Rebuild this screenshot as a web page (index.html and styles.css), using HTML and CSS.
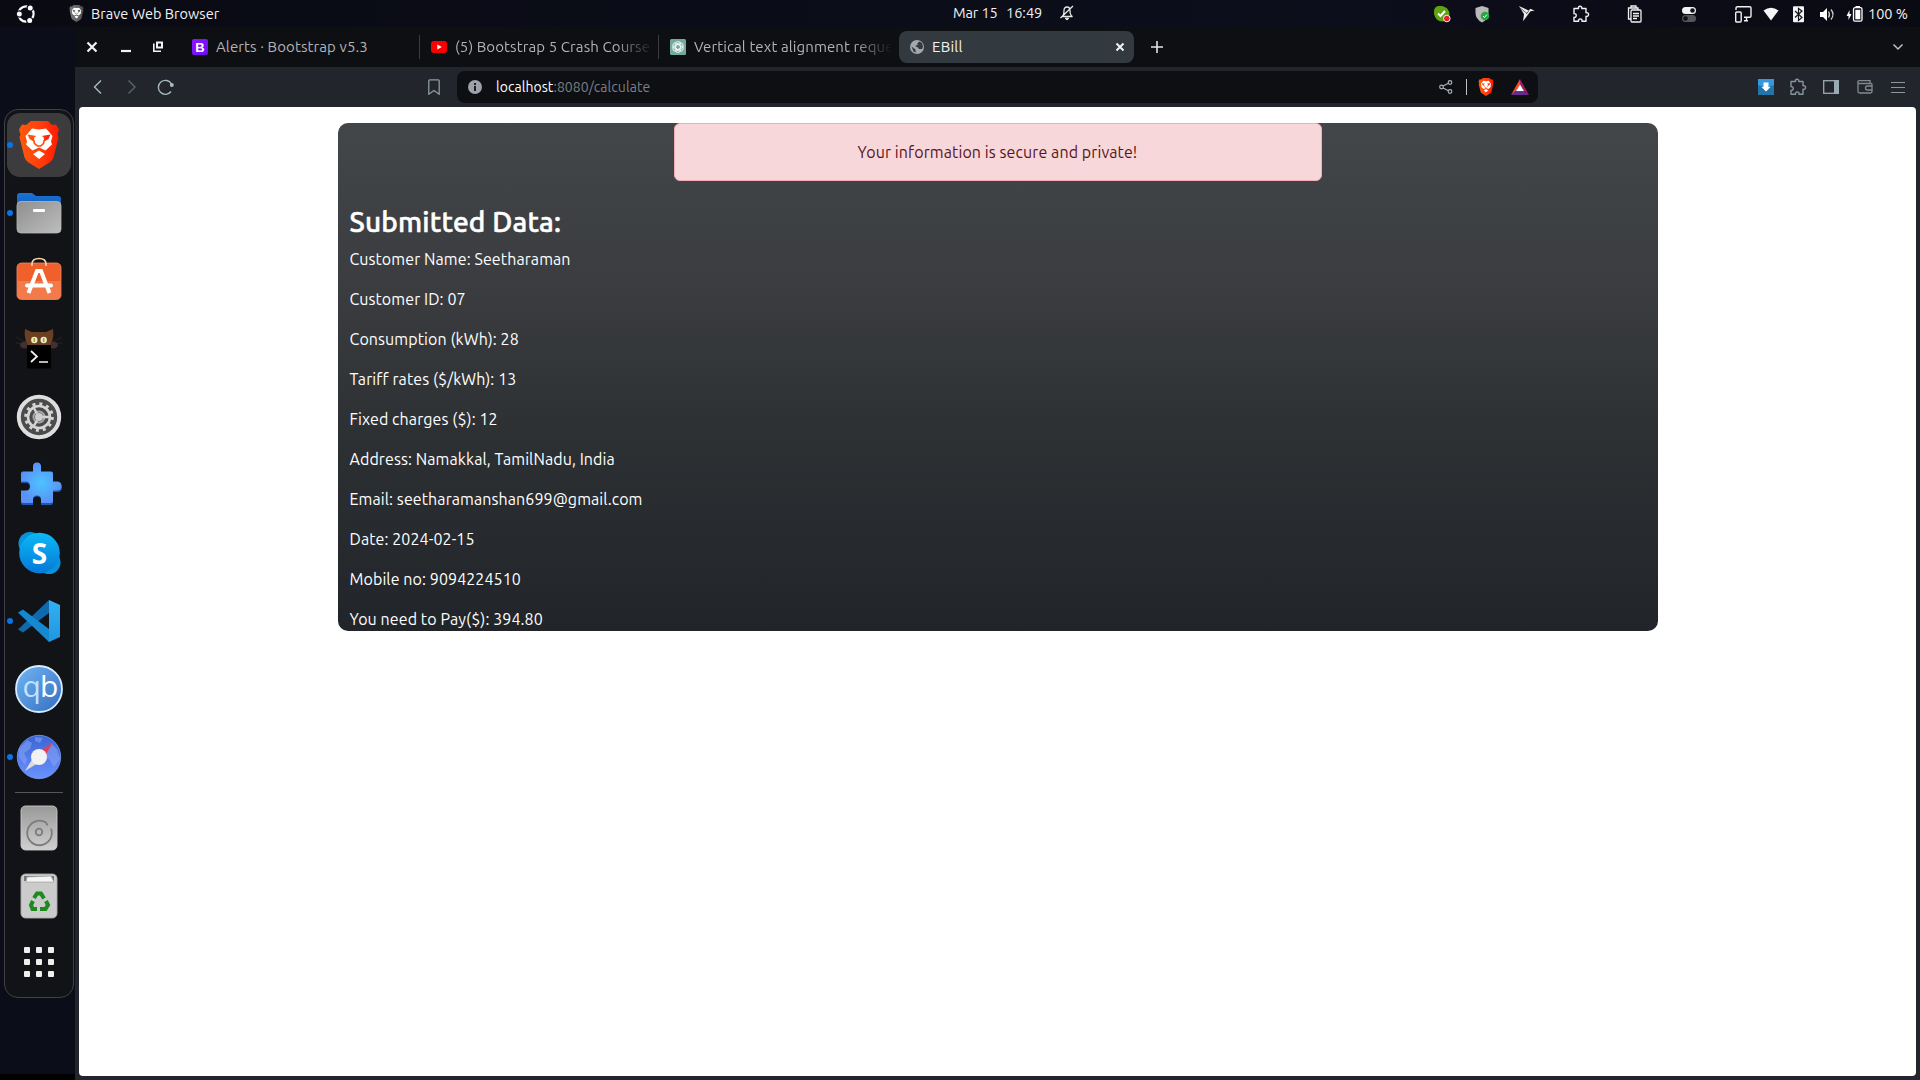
FILE: index.html
```html
<!DOCTYPE html>
<html lang="en">
<head>
<meta charset="utf-8">
<title>EBill</title>
<link rel="stylesheet" href="styles.css">
</head>
<body>
<svg class="defs" aria-hidden="true">
  <defs>
    <linearGradient id="g-brave" x1="0" x2="1"><stop offset="0" stop-color="#ff5a0a"/><stop offset=".55" stop-color="#ff3d0c"/><stop offset="1" stop-color="#ff1a00"/></linearGradient>
    <linearGradient id="g-blue" x1="0" x2="0" y1="0" y2="1"><stop offset="0" stop-color="#1a73d6"/><stop offset="1" stop-color="#0f5fbe"/></linearGradient>
    <linearGradient id="g-gray" x1="0" x2="1" y1="0" y2="1"><stop offset="0" stop-color="#8f8f8f"/><stop offset="1" stop-color="#bdbdbd"/></linearGradient>
    <linearGradient id="g-disk" x1="0" x2="0" y1="0" y2="1"><stop offset="0" stop-color="#999"/><stop offset="1" stop-color="#cfcfcf"/></linearGradient>
    <linearGradient id="g-skype" x1="0" x2="0" y1="0" y2="1"><stop offset="0" stop-color="#0cb8f4"/><stop offset="1" stop-color="#0579d8"/></linearGradient>
    <linearGradient id="g-vs" x1="0" x2="0" y1="0" y2="1"><stop offset="0" stop-color="#33b0f2"/><stop offset="1" stop-color="#2196e3"/></linearGradient>
    <linearGradient id="g-qb" x1="0" x2="1" y1="0" y2="1"><stop offset="0" stop-color="#72b4f5"/><stop offset="1" stop-color="#356ebf"/></linearGradient>
    <linearGradient id="g-nav" x1="0" x2="0" y1="0" y2="1"><stop offset="0" stop-color="#3b64d4"/><stop offset="1" stop-color="#6b93ff"/></linearGradient>
    <radialGradient id="g-puz"><stop offset="0" stop-color="#4cc4ff"/><stop offset="1" stop-color="#5a92f8"/></radialGradient>
    <linearGradient id="g-bs" x1="0" x2="1" y1="0" y2="1"><stop offset="0" stop-color="#9013fe"/><stop offset="1" stop-color="#6610f2"/></linearGradient>
    <symbol id="lion" viewBox="0 0 40 48">
      <path class="shield" d="M12 0h17l4 4 4-.5 3 5-1.500 5 1 3-5 20q-1 3-4 5L20 48l-10.500-6.500q-3-2-4-5L.5 16.500l1-3L0 8.500l3-5 4 .5z"/>
      <path class="face" d="M13 7.500l7 1 7-1 6.500 7.500-1.500 5.500 1 3-6.500 6L20 26.500l-6.500 3-6.500-6 1-3L6.500 15zM20 29.500l6 3.500-6 5-6-5z"/>
      <path class="shield" d="M8.500 13.500l9 1.500-2 1-1 4.500-4-2.500zM31.500 13.500l-9 1.500 2 1 1 4.500 4-2.500z"/>
      <path class="crease" d="M14.800 19l.7 3.500 3 2.500h3l3-2.500.7-3.500" />
    </symbol>
    <symbol id="puzzle" viewBox="0 0 18 18">
      <path d="M2 3.500h4.500c-.8-3 3.800-3 3.300 0H14v4.200c3.400-.8 3.400 4.300 0 3.600V16.300H10c.6-3.300-4-3.300-3.500 0H2v-4c3 .7 3-4.300 0-3.600z" fill="none" stroke="currentColor" stroke-width="1.400" stroke-linejoin="round"/>
    </symbol>
  </defs>
</svg>

<div class="desktop">
  <header class="topbar">
    <svg class="ubuntu" viewBox="0 0 20 20"><circle cx="10" cy="10" r="7.600" fill="none" stroke="#fff" stroke-width="2.200"/><g fill="#fff" stroke="#0a0b14" stroke-width="1.200"><circle cx="3.300" cy="10" r="3.100"/><circle cx="14.200" cy="3.900" r="3.100"/><circle cx="13.700" cy="16.600" r="3.100"/></g></svg>
    <svg class="app-icon gray-lion"><use href="#lion"/></svg>
    <span class="app-name">Brave Web Browser</span>
    <div class="clock"><span class="date">Mar 15</span><span class="time">16:49</span>
      <svg width="14" height="16" viewBox="0 0 14 16" fill="none" stroke="#e8e8e8"><path d="M2 11.500q2-1 2-6Q4 2 7 2t3 3.500q0 5 2.500 6zM.5 13L13 1" stroke-width="1.300"/><path d="M5 13.200h4L7 15z" fill="#fff"/></svg>
    </div>
    <div class="status">
      <svg class="s" viewBox="0 0 24 24"><rect x="4" y="4" width="12" height="12" rx="5" fill="#5fa30f"/><circle cx="12" cy="12" r="7.500" fill="#5fa30f"/><path d="M8 11.500l2.500 2.500L15 9" stroke="#fff" stroke-width="2" fill="none"/><circle cx="16.800" cy="16.500" r="3.300" fill="#e11e2b" stroke="#eee"/></svg>
      <svg class="s gap-m" viewBox="0 0 24 24"><path d="M12 4l6.500 2v5q0 6-6.500 9.500Q5.500 17 5.500 11V6z" fill="#b9b9b9"/><circle cx="15" cy="14" r="4.300" fill="#29a744"/><path d="M13 14l1.500 1.500 2.500-3" stroke="#fff" fill="none"/></svg>
      <svg class="s gap-bird" viewBox="0 0 24 24"><path d="M5 4l9.500 4.500 2-1.800 4 2-4 .6-3 4-4.500 6 1-7z" fill="#ececec"/><path d="M5 5l8 6.500M15 8.500l-2.500 3.500" stroke="#333" stroke-width=".7"/></svg>
      <svg class="s gap-l white"><use href="#puzzle" x="3" y="3" width="18" height="18"/></svg>
      <svg class="s gap-30" viewBox="0 0 24 24" fill="none" stroke="#f2f2f2" stroke-width="1.300"><path d="M8 17H5.500V6H15v2M8 6V4h5v2"/><rect x="8" y="8" width="10" height="12" rx="1"/><path d="M10 11.500h6M10 14h6M10 16.500h4"/></svg>
      <svg class="s gap-30" viewBox="0 0 24 24"><rect x="5" y="5" width="14" height="7" rx="3.500" fill="#f2f2f2"/><circle cx="15.500" cy="8.500" r="2.300" fill="#111"/><rect x="5" y="13" width="14" height="7" rx="3.500" fill="#55565b"/><circle cx="8.500" cy="16.500" r="2.300" fill="#111"/></svg>
      <svg class="s gap-30" viewBox="0 0 24 24" fill="none" stroke="#f0f0f0" stroke-width="1.400"><path d="M5 8V6q0-1.300 1.300-1.300h12.400Q20 4.700 20 6v8q0 1.300-1.300 1.300H13M15.500 15v3.500M13 18.800h4"/><rect x="4.700" y="10" width="5.500" height="10" rx="1"/></svg>
      <svg class="s gap-4" viewBox="0 0 24 24"><path d="M4.500 8.500Q12 3 19.500 8.500L12 18.500z" fill="#f5f5f5"/></svg>
      <svg class="s gap-3" viewBox="0 0 24 24"><rect x="7" y="4.200" width="11" height="16" rx="1" fill="#f5f5f5"/><path d="M9 9l7 6.500-3.500 3v-12L16 9l-7 6.500" fill="none" stroke="#15161d" stroke-width="1.200"/></svg>
      <svg class="s gap-5" viewBox="0 0 24 24"><path d="M5 10h3l4-4v13l-4-4H5z" fill="#fff"/><path d="M13.500 9.500q2 3 0 6M16 7.500q4 5 0 10" stroke="#ccc" stroke-width="1.300" fill="none"/></svg>
      <svg class="s gap-4" viewBox="0 0 24 24"><path d="M6.500 8L3.500 14h2v4l3-6h-2z" fill="#fff"/><rect x="10.500" y="5.700" width="8.500" height="13.500" rx="1.500" fill="none" stroke="#fff" stroke-width="1.300"/><path d="M12.500 4.500h4.500" stroke="#fff"/><rect x="12.300" y="7.800" width="5" height="9.500" fill="#fff"/></svg>
      <span class="battery">100 %</span>
    </div>
  </header>

  <div class="workspace">
    <aside class="side">
      <nav class="dock">
        <div class="item active running"><svg class="lion-dock"><use href="#lion"/></svg></div>
        <div class="item running"><svg viewBox="0 0 48 48"><path d="M2 18V7q0-3 3-3h12l4 3h22q3 0 3 3v8z" fill="url(#g-blue)"/><rect x="2" y="12.500" width="44" height="31.500" rx="4" fill="url(#g-gray)" stroke="#b8b8b8" stroke-width=".8"/><rect x="18" y="20" width="12" height="3" rx="1" fill="#fff"/></svg></div>
        <div class="item"><svg viewBox="0 0 48 48"><rect x="2" y="6" width="44" height="36.500" rx="4.500" fill="#f0602c" stroke="#f58a63" stroke-width=".8"/><path d="M2.400 24h43.200v14q0 4-4 4h-35q-4.200 0-4.200-4z" fill="#f37a4a"/><path d="M17 9V7q0-5.500 7-5.500T31 7v2" fill="none" stroke="#f3d6a8" stroke-width="1.600"/><path d="M13.500 36L22 14h4l8.500 22" fill="none" stroke="#fff" stroke-width="4"/><rect x="10" y="26.500" width="28" height="4" rx="2" fill="#fff"/></svg></div>
        <div class="item"><svg viewBox="0 0 48 48"><path d="M1 12l9 5M1 18l8 1M47 12l-9 5M47 18l-8 1" stroke="#2a2222"/><ellipse cx="10" cy="20" rx="5" ry="3.500" fill="#40302f"/><ellipse cx="38" cy="20" rx="5" ry="3.500" fill="#40302f"/><path d="M10 4l7 3h14l7-3q1 6-.5 11L35 20H13l-2.500-5Q9 9 10 4z" fill="#6b3f22"/><circle cx="19.300" cy="15" r="3.200" fill="#e8eac8"/><circle cx="28.700" cy="15" r="3.200" fill="#e8eac8"/><path d="M19.300 13v4M28.700 13v4" stroke="#a0a420" stroke-width="1.500"/><rect x="12" y="20" width="24" height="23.500" rx="1" fill="#000"/><path d="M16 26l6 5.500-6 5.500M24 37h9" fill="none" stroke="#f4f4f4" stroke-width="1.700"/></svg></div>
        <div class="item"><svg viewBox="0 0 48 48"><circle cx="24" cy="24" r="20.200" fill="#4b4b4b" stroke="#dedede" stroke-width="4"/><circle cx="24" cy="24" r="13.300" fill="none" stroke="#d5d5d5" stroke-width="3" stroke-dasharray="3 3.960"/><circle cx="24" cy="24" r="11" fill="none" stroke="#d5d5d5" stroke-width="2.600"/><circle cx="24" cy="24" r="5.500" fill="none" stroke="#a8a8a8" stroke-width="2"/><circle cx="24" cy="24" r="4" fill="#d0d0d0"/><path d="M28 24h8M22 27.500l-4 7M22 20.500l-4-7" stroke="#d5d5d5" stroke-width="2.500"/></svg></div>
        <div class="item"><svg viewBox="0 0 48 48"><path d="M8 12.500h10V7q0-4 4-4t4 4v5.500h10q2 0 2 2V22h4q5 0 5 4.500T42 31h-4v11q0 2-2 2H26v-5q0-3.500-4-3.500T18 39v5H8q-2 0-2-2V31h5q4 0 4-4.500T11 22H6v-7.500q0-2 2-2z" fill="#1e56b4"/><path d="M8 10.500h10V5.500q0-4 4-4t4 4v5h10q2 0 2 2v8h4q4.500 0 4.500 4.500t-4.500 4.500h-4V40q0 2-2 2H26v-4q0-3.500-4-3.500T18 38v4H8q-2 0-2-2V29.500h5q4 0 4-4.500t-4-4.500H6v-8q0-2 2-2z" fill="url(#g-puz)"/></svg></div>
        <div class="item"><svg viewBox="0 0 48 48"><circle cx="15" cy="14.500" r="11.500" fill="#0693dc"/><circle cx="34" cy="33.500" r="11.500" fill="#0693dc"/><circle cx="24.500" cy="24" r="20.300" fill="url(#g-skype)"/><text x="24.500" y="34.500" class="skype-s">S</text></svg></div>
        <div class="item running"><svg viewBox="0 0 48 48"><path d="M3 32.500L34 3v13L8 35.500z" fill="#0f69ad"/><path d="M3 15.500L8 12.500 34 32v13z" fill="#1488d0"/><path d="M34 3l11 5v32l-11 5z" fill="url(#g-vs)"/></svg></div>
        <div class="item"><svg viewBox="0 0 48 48"><circle cx="24" cy="24" r="23" fill="url(#g-qb)" stroke="#d8ecff" stroke-width="1.800"/><text x="7.500" y="31.500" class="qb"><tspan fill="#bfe3ff">q</tspan><tspan fill="#fff">b</tspan></text></svg></div>
        <div class="item running"><svg viewBox="0 0 48 48"><circle cx="24" cy="24" r="21.700" fill="url(#g-nav)" stroke="#7c9cf0" stroke-width=".8"/><path d="M4 16l8-9 5 3-2 6-6 4 3 7-2 5-6-8zM20 4l8 1-3 5-5-2zM36 10l6 6 3 10-6 8-5-8-4-1 2-8z" fill="#86a5f5" opacity=".55"/><path d="M38 9.500L20 21l7 7z" fill="#e0405a"/><path d="M10 38l11-18 7 7z" fill="#dcdcdc"/><circle cx="24" cy="24" r="8" fill="#f2f2f2"/></svg></div>
        <hr>
        <div class="item"><svg viewBox="0 0 48 48"><rect x="6" y="2" width="36" height="44" rx="4.500" fill="url(#g-disk)" stroke="#c8c8c8" stroke-width=".9"/><path d="M31 18.500A12.300 12.300 0 1 0 36 24.500M31 18.500l1.500 3" fill="none" stroke="#7c7c7c" stroke-width="1.800"/><circle cx="24" cy="28" r="3.300" fill="none" stroke="#7c7c7c" stroke-width="1.800"/></svg></div>
        <div class="item"><svg viewBox="0 0 48 48"><rect x="6" y="2" width="36" height="44" rx="4.500" fill="#cbcbcb" stroke="#aaa" stroke-width=".9"/><path d="M9 4h30v5H9z" fill="#777"/><path d="M12 5l24-1 3 6H11z" fill="#f4f4f4" stroke="#999" stroke-width=".6"/><g fill="none" stroke="#1d8a1d" stroke-width="4"><path d="M19 26l3-4.500h4l3 5"/><path d="M31 29l2 4-2.500 4H25"/><path d="M22 37h-4.500L16 33l2-4"/></g></svg></div>
        <div class="item apps"><svg viewBox="0 0 48 48" fill="#efefeb"><rect x="9" y="9" width="6" height="6" rx="1"/><rect x="21" y="9" width="6" height="6" rx="1"/><rect x="33" y="9" width="6" height="6" rx="1"/><rect x="9" y="21" width="6" height="6" rx="1"/><rect x="21" y="21" width="6" height="6" rx="1"/><rect x="33" y="21" width="6" height="6" rx="1"/><rect x="9" y="33" width="6" height="6" rx="1"/><rect x="21" y="33" width="6" height="6" rx="1"/><rect x="33" y="33" width="6" height="6" rx="1"/></svg></div>
      </nav>
    </aside>

    <main class="browser">
      <div class="tabs">
        <svg class="wm" viewBox="0 0 90 20"><path d="M7.500 5.500l9 9M16.500 5.500l-9 9" stroke="#f2f2f2" stroke-width="2.200"/><path d="M41 14h10" stroke="#f2f2f2" stroke-width="2.200"/><path d="M73.800 6.500v7.700H81" fill="none" stroke="#f2f2f2" stroke-width="1.600"/><rect x="77" y="5.500" width="5" height="5" fill="none" stroke="#f2f2f2" stroke-width="2"/></svg>
        <div class="tab tab-1"><svg width="16" height="16"><rect width="16" height="16" rx="2" fill="url(#g-bs)"/><text x="8" y="13" class="bs">B</text></svg><span class="title">Alerts · Bootstrap v5.3</span></div>
        <div class="tab tab-2"><svg width="16" height="16"><rect y="2" width="16" height="12" rx="3" fill="#f00"/><path d="M6.300 5.500v5l4.500-2.500z" fill="#fff"/></svg><span class="title fade">(5) Bootstrap 5 Crash Course</span></div>
        <div class="tab tab-3"><svg width="16" height="16" viewBox="0 0 16 16"><rect width="16" height="16" rx="1.500" fill="#74aa9c"/><g fill="none" stroke="#e8f3f0" stroke-width=".9"><rect x="5.300" y="2.500" width="5.400" height="8" rx="2.700"/><rect x="5.300" y="2.500" width="5.400" height="8" rx="2.700" transform="rotate(60 8 8)"/><rect x="5.300" y="2.500" width="5.400" height="8" rx="2.700" transform="rotate(120 8 8)"/><rect x="5.300" y="2.500" width="5.400" height="8" rx="2.700" transform="rotate(180 8 8)"/><rect x="5.300" y="2.500" width="5.400" height="8" rx="2.700" transform="rotate(240 8 8)"/><rect x="5.300" y="2.500" width="5.400" height="8" rx="2.700" transform="rotate(300 8 8)"/></g></svg><span class="title fade">Vertical text alignment reque</span></div>
        <div class="tab current"><svg width="14" height="14" viewBox="0 0 14 14"><circle cx="7" cy="7" r="7" fill="#a2a7b0"/><path d="M9.500 1.500l-2 1.500v2L5 6l3 1.500 1 1.500h3l1-2-1-4zM1.500 6.500l4 3v1.500l1 1.500-3-1z" fill="#32393f"/></svg><span class="title">EBill</span><svg class="x" width="10" height="10"><path d="M1.500 1.500l7 7M8.500 1.500l-7 7" stroke="#f2f2f2" stroke-width="2"/></svg></div>
        <svg class="plus" width="12" height="12"><path d="M6 0v12M0 6h12" stroke="#e4e4e4" stroke-width="1.600"/></svg>
        <svg class="chev" width="12" height="8"><path d="M1.500 1.500L6 6l4.500-4.500" fill="none" stroke="#b4c3ca" stroke-width="1.500"/></svg>
      </div>

      <div class="toolbar">
        <svg class="nav" viewBox="0 0 100 20" fill="none" stroke="#a9b9c0" stroke-width="1.400"><path d="M17 3.500L10.500 10l6.500 6.500"/><path d="M44.500 3.500L51 10l-6.500 6.500" stroke="#5b646b"/><path d="M87 14.500A7 7 0 1 1 87.500 7"/><circle cx="87.800" cy="8" r="2" fill="#a9b9c0" stroke="none"/></svg>
        <svg class="bookmark" width="12" height="16"><path d="M.8 1.800q0-1 1-1h8.400q1 0 1 1v13.400L6 11.500.8 15.200z" fill="none" stroke="#8d9ba3" stroke-width="1.300"/></svg>
        <div class="url">
          <svg width="14" height="14"><circle cx="7" cy="7" r="7" fill="#9ea1aa"/><path d="M7 3v2M7 6v5" stroke="#101116" stroke-width="1.800"/></svg>
          <span class="addr"><b>localhost</b>:8080/calculate</span>
          <svg class="share" width="14" height="14" fill="none" stroke="#aeb3b8" stroke-width="1.200"><circle cx="2.500" cy="7" r="1.800"/><circle cx="11" cy="2.500" r="1.800"/><circle cx="11" cy="11.500" r="1.800"/><path d="M4 6l5.500-2.700M4 8l5.500 2.700"/></svg>
          <i class="bar"></i>
          <svg class="brave-small"><use href="#lion"/></svg>
          <svg class="bat" width="18" height="16"><path d="M9 0v5.500L5 12 0 16z" fill="#ff4724"/><path d="M9 0l9 16-5-4-4-6.500z" fill="#9e1f63"/><path d="M0 16l5-4h8l5 4z" fill="#662d91"/><path d="M9 5.500L13 12H5z" fill="#fff"/></svg>
        </div>
        <div class="ext">
          <svg width="16" height="16"><path d="M0 0h16v16H0z" fill="#2374a8"/><path d="M0 0h16v6L8 9 0 6z" fill="#3498db"/><path d="M5.500 3.500h5V8h2L8 12.500 3.500 8h2z" fill="#fff"/></svg>
          <svg class="pz" width="18" height="18"><use href="#puzzle"/></svg>
          <svg class="panel" width="16" height="14"><rect x=".7" y=".7" width="14.600" height="12.600" fill="none" stroke="#9aaab2" stroke-width="1.300"/><path d="M11 0h5v14h-5z" fill="#9aaab2"/></svg>
          <svg class="wallet" width="16" height="14" fill="none" stroke="#7e8a91" stroke-width="1.300"><path d="M1 3V11.500q0 1.500 1.500 1.500h11q1.500 0 1.500-1.500V4.500q0-1-1-1H1.700Q.7 3.300.7 2 1 .7 2.200.7H13v2.500M15 6h-4.500Q8.500 6 8.500 8t2 2H15"/></svg>
          <svg class="menu" width="14" height="12"><path d="M0 1.500h14M0 6.500h14M0 11.500h14" stroke="#8b979e" stroke-width="1"/></svg>
        </div>
      </div>

      <div class="page">
        <section class="card">
          <div class="alert">Your information is secure and private!</div>
          <h3>Submitted Data:</h3>
          <p>Customer Name: Seetharaman</p>
          <p>Customer ID: 07</p>
          <p>Consumption (kWh): 28</p>
          <p>Tariff rates ($/kWh): 13</p>
          <p>Fixed charges ($): 12</p>
          <p>Address: Namakkal, TamilNadu, India</p>
          <p>Email: seetharamanshan699@gmail.com</p>
          <p>Date: 2024-02-15</p>
          <p>Mobile no: 9094224510</p>
          <p>You need to Pay($): 394.80</p>
        </section>
      </div>
    </main>
  </div>
</div>
</body>
</html>
```
FILE: styles.css
```css
* { box-sizing: border-box; }
body { margin: 0; font-family: Ubuntu, "Noto Sans", sans-serif; overflow: hidden; }
svg { display: block; flex: none; }
.defs { position: absolute; width: 0; height: 0; }
.desktop { width: 1920px; height: 1080px; display: flex; flex-direction: column; background: #0b0d19; }

.topbar { height: 27px; display: grid; grid-template-columns: 69px 22px 862px 1fr auto; align-items: center; background: linear-gradient(90deg, #090a12, #0b0d19 45%, #0d0e1b 70%, #090a12); color: #f2f2f2; font-size: 14.5px; white-space: nowrap; }
.ubuntu { width: 20px; height: 20px; margin-left: 16px; }
.app-icon { width: 15px; height: 17px; }
.shield { fill: url(#g-brave); }
.face { fill: #fff; }
.crease { fill: none; stroke: #ff4a10; stroke-width: 1.6; }
.gray-lion { filter: grayscale(1); }
.app-name { letter-spacing: .03px; }
.clock { display: flex; align-items: center; padding-bottom: 2px; }
.date { width: 53px; letter-spacing: -.1px; }
.time { width: 55px; }
.clock svg { margin-left: -1px; }
.status { display: flex; align-items: center; padding-right: 13px; }
.s { width: 24px; height: 24px; }
.white { color: #f2f2f2; }
.gap-m { margin-left: 16px; }
.gap-bird { margin-left: 20px; }
.gap-l { margin-left: 31px; }
.gap-30 { margin-left: 30px; }
.gap-3 { margin-left: 3px; }
.gap-4 { margin-left: 4px; }
.gap-5 { margin-left: 5px; }
.battery { width: 39px; margin-left: 1px; }

.workspace { flex: 1; display: flex; min-height: 0; }
.side { width: 75px; padding: 82px 0 0 4px; border-bottom: 6px solid #000; }
.dock { width: 70px; height: 889px; padding: 3px 2px; display: flex; flex-direction: column; gap: 4px; border: 1px solid #414147; border-radius: 14px; background: #121317; }
.item { position: relative; height: 64px; flex: none; display: flex; align-items: center; justify-content: center; border-radius: 13px; }
.item svg { width: 48px; height: 48px; }
.item .lion-dock { width: 40px; height: 48px; }
.item.active { background: #3c3c3f; }
.item.running::before { content: ""; position: absolute; left: 0; top: 29px; width: 6px; height: 6px; border-radius: 50%; background: #0a73e8; }
.item.apps { margin-top: -2px; }
.dock hr { width: 48px; height: 1px; flex: none; margin: -1px auto -1px; border: 0; background: #55565a; }
.skype-s { font: 700 28px "Open Sans", sans-serif; fill: #fff; text-anchor: middle; }
.qb { font: 30px "Open Sans", "Noto Sans", sans-serif; letter-spacing: -.9px; }

.browser { flex: 1; display: flex; flex-direction: column; background: #23252d; }
.tabs { height: 40px; display: flex; align-items: center; background: #0e0f13; color: #b3b3b5; font-size: 15px; letter-spacing: .1px; }
.wm { width: 90px; height: 20px; margin: 0 22px 0 5px; }
.tab { display: flex; align-items: center; height: 24px; gap: 8px; white-space: nowrap; }
.tab-1 { width: 228px; border-right: 1px solid #3b3c40; margin-right: 11px; }
.tab-2 { width: 228px; border-right: 1px solid #3b3c40; margin-right: 11px; }
.tab-3 { width: 229px; }
.title { padding-bottom: 2px; }
.fade { width: 200px; mask-image: linear-gradient(90deg, #000 160px, transparent 198px); }
.current { width: 235px; height: 32px; padding: 0 9px 0 11px; border-radius: 8px; background: #32393f; color: #f2f2f2; letter-spacing: .25px; }
.x { margin-left: auto; }
.plus { margin-left: 17px; }
.chev { margin: 0 16px 0 auto; }
.bs { font: 700 13px "Liberation Sans", sans-serif; fill: #fff; text-anchor: middle; letter-spacing: 0; }

.toolbar { height: 40px; display: flex; align-items: center; }
.nav { width: 100px; height: 20px; margin-left: 9px; }
.bookmark { margin-left: 244px; }
.url { width: 1081px; height: 32px; margin-left: 17px; padding: 0 9px 0 11px; display: flex; align-items: center; border-radius: 8px; background: #0e0f13; }
.addr { margin-left: 14px; font-size: 14px; letter-spacing: .05px; color: #7b7f84; }
.addr b { font-weight: 400; color: #fff; }
.share { margin-left: auto; }
.bar { width: 1px; height: 16px; margin: 0 11px 0 13px; background: #c0c0c0; }
.brave-small { width: 16px; height: 18px; margin-right: 17px; }
.ext { flex: 1; display: flex; align-items: center; justify-content: flex-end; padding-right: 15px; }
.pz { margin-left: 15px; color: #8595a0; }
.panel { margin-left: 16px; }
.wallet { margin-left: 18px; }
.menu { margin-left: 18px; }

.page { flex: 1; margin: 0 4px 4px; padding-top: 16px; border-radius: 4px; background: #fff; }
.card { width: 1320px; height: 508px; margin: 0 auto; padding: 0 12px; border-radius: 10px; background: linear-gradient(#434649, #3a3c3f 33%, #2d3033 62%, #212529); color: #fff; font-size: 16px; line-height: 24px; letter-spacing: .09px; }
.alert { width: 648px; height: 58px; margin: 0 auto 24px; padding: 16px; border: 1px solid #f1aeb5; border-radius: 6px; background: #f8d7da; color: #58151c; text-align: center; }
h3 { margin: 0 0 8px; font-size: 28px; font-weight: 500; line-height: 34px; letter-spacing: .2px; -webkit-text-stroke: .55px #fff; }
.card p { margin: 0 0 16px; }
```
